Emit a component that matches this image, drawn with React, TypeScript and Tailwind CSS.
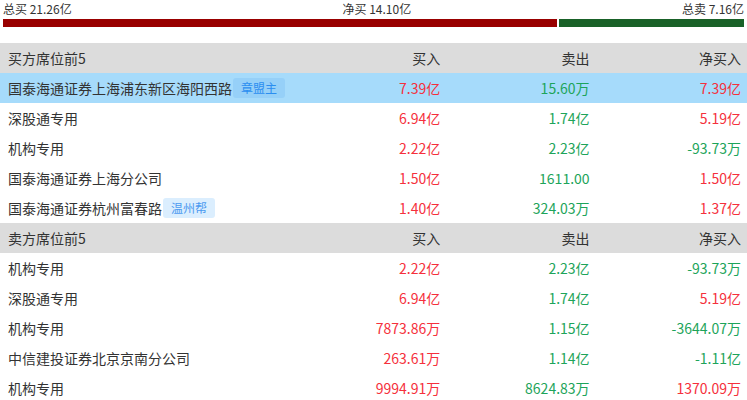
const buyRows = [
  { name: "国泰海通证券上海浦东新区海阳西路", tag: "章盟主", buy: "7.39亿", sell: "15.60万", net: "7.39亿", up: true, active: true },
  { name: "深股通专用", buy: "6.94亿", sell: "1.74亿", net: "5.19亿", up: true },
  { name: "机构专用", buy: "2.22亿", sell: "2.23亿", net: "-93.73万", up: false },
  { name: "国泰海通证券上海分公司", buy: "1.50亿", sell: "1611.00", net: "1.50亿", up: true },
  { name: "国泰海通证券杭州富春路", tag: "温州帮", buy: "1.40亿", sell: "324.03万", net: "1.37亿", up: true },
];

const sellRows = [
  { name: "机构专用", buy: "2.22亿", sell: "2.23亿", net: "-93.73万", up: false },
  { name: "深股通专用", buy: "6.94亿", sell: "1.74亿", net: "5.19亿", up: true },
  { name: "机构专用", buy: "7873.86万", sell: "1.15亿", net: "-3644.07万", up: false },
  { name: "中信建投证券北京京南分公司", buy: "263.61万", sell: "1.14亿", net: "-1.11亿", up: false },
  { name: "机构专用", buy: "9994.91万", sell: "8624.83万", net: "1370.09万", up: true },
];

type Row = (typeof buyRows)[number];

function HeaderRow({ title }: { title: string }) {
  return (
    <div className="grid grid-cols-[2fr_1fr_1fr_1fr] h-[30px] items-center bg-[#dcdcdc] text-[#333] text-[14px]">
      <div className="pl-2">{title}</div>
      <div className="text-right pr-2">买入</div>
      <div className="text-right pr-2">卖出</div>
      <div className="text-right pr-[6px]">净买入</div>
    </div>
  );
}

function DataRow({ row }: { row: Row }) {
  return (
    <div
      className={`grid grid-cols-[2fr_1fr_1fr_1fr] h-[30px] items-center text-[14px] ${
        row.active ? "bg-[#a6dbfb]" : "bg-white"
      }`}
    >
      <div className="pl-2 flex items-center text-[#333] whitespace-nowrap">
        {row.name}
        {row.tag && (
          <span
            className={`ml-[1px] h-5 px-2 rounded-[3px] text-[12px] leading-5 ${
              row.active ? "bg-[#96d0f8] text-[#2b8ef0]" : "bg-[#dbeefe] text-[#4b9af0]"
            }`}
          >
            {row.tag}
          </span>
        )}
      </div>
      <div className="text-right pr-2 text-[#f5303c]">{row.buy}</div>
      <div className="text-right pr-2 text-[#1da45a]">{row.sell}</div>
      <div className={`text-right pr-[6px] ${row.up ? "text-[#f5303c]" : "text-[#1da45a]"}`}>
        {row.net}
      </div>
    </div>
  );
}

export default function App() {
  const totalBuy = 21.26;
  const totalSell = 7.16;
  const buyPct = (totalBuy / (totalBuy + totalSell)) * 100;

  return (
    <div
      className="w-[747px] h-[400px] overflow-hidden bg-white"
      style={{ fontFamily: '"Noto Sans CJK SC", "Noto Sans", sans-serif' }}
    >
      {/* Summary */}
      <div className="px-[3px] pt-[1px]">
        <div className="flex justify-between text-[12px] leading-[16px] text-[#333]">
          <span>总买 21.26亿</span>
          <span>净买 14.10亿</span>
          <span>总卖 7.16亿</span>
        </div>
        <div className="flex gap-[2px] h-2 mt-[2px]">
          <div className="bg-[#990000]" style={{ width: `${buyPct}%` }} />
          <div className="bg-[#196128] flex-1" />
        </div>
      </div>

      {/* Table */}
      <div className="mt-[16px]">
        <HeaderRow title="买方席位前5" />
        {buyRows.map((r, i) => (
          <DataRow key={i} row={r} />
        ))}
        <HeaderRow title="卖方席位前5" />
        {sellRows.map((r, i) => (
          <DataRow key={i} row={r} />
        ))}
      </div>
    </div>
  );
}
